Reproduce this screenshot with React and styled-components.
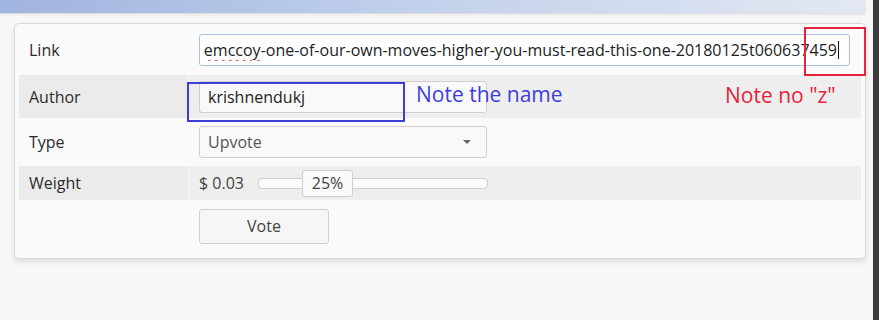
import React from 'react';
import styled, { createGlobalStyle } from 'styled-components';

const GlobalStyle = createGlobalStyle`
	html, body {
		margin: 0;
		padding: 0;
		background: #f7f7f7;
		font-family: "Open Sans", "Liberation Sans", sans-serif;
		color: #333;
	}
`;

const Page = styled.div`
	position: relative;
	display: flex;
	height: 320px;
	overflow: hidden;
`;

const Main = styled.div`
	flex: 1;
	padding: 0 7px 0 14px;
`;

const Scrollbar = styled.div`
	width: 6px;
	background: #3c3c3c;
`;

const TopBar = styled.div`
	height: 13px;
	margin-left: -14px;
	background: linear-gradient(to right, #9fb4de, #c3d1ec 50%, #e3e8f2);
	border-bottom: 1px solid #dedede;
	border-radius: 0 0 4px 0;
	box-shadow: 0 2px 2px rgba(0, 0, 0, 0.04);
`;

const Card = styled.div`
	margin-top: 9px;
	height: 232px;
	padding: 1px 4px;
	background: #fafafa;
	border: 1px solid #d9d9d9;
	border-radius: 5px;
	box-shadow: 0 3px 5px rgba(0, 0, 0, 0.1);
`;

const Row = styled.div`
	display: grid;
	grid-template-columns: 169px 1fr;
	height: ${props => props.h}px;
	background: ${props => props.shaded ? '#eeeeee' : 'transparent'};
`;

const Label = styled.div`
	display: flex;
	align-items: center;
	padding-left: 10px;
	font-size: 16px;
	color: #2b2b2b;
	background: ${props => props.shaded ? '#ebebeb' : 'transparent'};
`;

const Cell = styled.div`
	display: flex;
	align-items: center;
	padding: 0 11px 0 10px;
	border-left: 1px solid ${props => props.shaded ? '#f6f6f6' : 'transparent'};
	min-width: 0;
`;

const Field = styled.div`
	box-sizing: border-box;
	display: flex;
	align-items: center;
	width: ${props => props.wide ? '100%' : '288px'};
	height: 32px;
	padding: 0 8px;
	background: ${props => props.wide ? '#fff' : '#f9f9f9'};
	border: 1px solid ${props => props.wide ? '#a9c1e2' : '#cfcfcf'};
	border-radius: 3px;
	font-size: 16px;
	color: ${props => props.muted ? '#555' : '#222'};
	overflow: hidden;
	white-space: nowrap;
`;

const Scrolled = styled.div`
	flex: 1;
	display: flex;
	justify-content: flex-end;
	overflow: hidden;
	margin-left: -4px;
`;

const Misspelt = styled.span`
	text-decoration: underline wavy #e03030;
	text-decoration-thickness: 1px;
	text-underline-offset: 3px;
`;

const Caret = styled.span`
	display: inline-block;
	width: 1px;
	height: 18px;
	margin-left: 1px;
	margin-right: 2px;
	background: #111;
	align-self: center;
`;

const Arrow = styled.span`
	margin-left: auto;
	margin-right: 7px;
	width: 0;
	height: 0;
	border-left: 4px solid transparent;
	border-right: 4px solid transparent;
	border-top: 4px solid #666;
`;

const Amount = styled.span`
	font-size: 16px;
	color: #444;
	width: 59px;
	flex-shrink: 0;
`;

const Track = styled.div`
	position: relative;
	box-sizing: border-box;
	width: 230px;
	height: 11px;
	background: #fcfcfc;
	border: 1px solid #cfcfcf;
	border-radius: 4px;
`;

const Handle = styled.div`
	position: absolute;
	top: -9px;
	left: ${props => props.at}px;
	box-sizing: border-box;
	width: 51px;
	height: 27px;
	display: flex;
	align-items: center;
	justify-content: center;
	background: #fafafa;
	border: 1px solid #cfcfcf;
	border-radius: 3px;
	font-size: 16px;
	color: #444;
`;

const Button = styled.button`
	box-sizing: border-box;
	width: 130px;
	height: 35px;
	background: #f6f6f6;
	border: 1px solid #cfcfcf;
	border-radius: 3px;
	font-family: inherit;
	font-size: 16px;
	color: #444;
`;

const Box = styled.div`
	position: absolute;
	left: ${props => props.x}px;
	top: ${props => props.y}px;
	width: ${props => props.w}px;
	height: ${props => props.h}px;
	box-sizing: border-box;
	border: 2px solid ${props => props.color};
`;

const Note = styled.div`
	position: absolute;
	left: ${props => props.x}px;
	top: ${props => props.y}px;
	font-size: 21px;
	color: ${props => props.color};
	white-space: nowrap;
`;

const BLUE = '#3d3ddc';
const RED = '#e5233b';

export default function App() {
	return (
		<Page>
			<GlobalStyle />
			<Main>
				<TopBar />
				<Card>
					<Row h={50}>
						<Label>Link</Label>
						<Cell>
							<Field wide>
								<Scrolled>
									<span>re-jer<Misspelt>emccoy</Misspelt>-one-of-our-own-moves-higher-you-must-read-this-one-20180125t060637459</span>
								</Scrolled>
								<Caret />
							</Field>
						</Cell>
					</Row>
					<Row h={43} shaded>
						<Label shaded>Author</Label>
						<Cell shaded>
							<Field>krishnendukj</Field>
						</Cell>
					</Row>
					<Row h={48}>
						<Label>Type</Label>
						<Cell>
							<Field muted>
								Upvote
								<Arrow />
							</Field>
						</Cell>
					</Row>
					<Row h={34} shaded>
						<Label shaded>Weight</Label>
						<Cell shaded>
							<Amount>$ 0.03</Amount>
							<Track>
								<Handle at={43}>25%</Handle>
							</Track>
						</Cell>
					</Row>
					<Row h={52}>
						<Label />
						<Cell>
							<Button>Vote</Button>
						</Cell>
					</Row>
				</Card>
			</Main>
			<Scrollbar />
			<Box x={187} y={82} w={218} h={40} color={BLUE} />
			<Note x={416} y={80} color={BLUE}>Note the name</Note>
			<Note x={725} y={81} color={RED}>Note no "z"</Note>
			<Box x={804} y={27} w={62} h={49} color={RED} />
		</Page>
	);
}
